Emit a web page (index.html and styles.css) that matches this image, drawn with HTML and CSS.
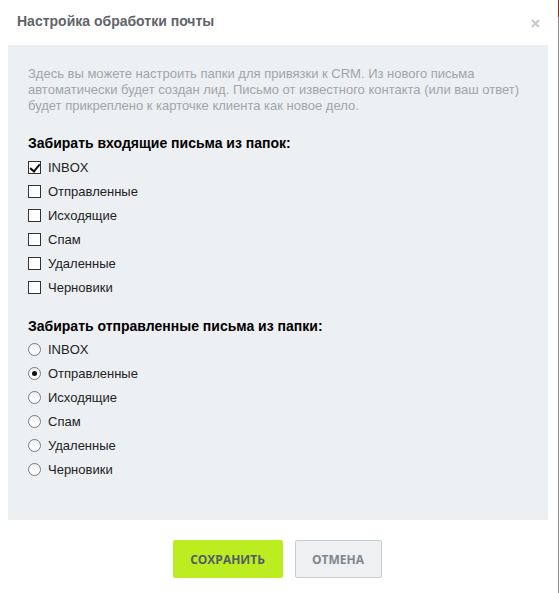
FILE: index.html
```html
<!DOCTYPE html>
<html lang="ru">
<head>
  <meta charset="UTF-8">
  <meta name="viewport" content="width=device-width, initial-scale=1">
  <title>Настройка обработки почты</title>
  <link rel="stylesheet" href="styles.css">
</head>
<body>
  <div class="popup">
    <div class="popup-head">
      <span class="popup-title">Настройка обработки почты</span>
      <span class="popup-close">
        <svg width="9" height="9" viewBox="0 0 9 9"><path d="M1 1L8 8M8 1L1 8" stroke="#c9c9c9" stroke-width="2"/></svg>
      </span>
    </div>

    <div class="popup-body">
      <p class="hint">Здесь вы можете настроить папки для привязки к CRM. Из нового письма автоматически будет создан лид. Письмо от известного контакта (или ваш ответ) будет прикреплено к карточке клиента как новое дело.</p>

      <div class="group">
        <div class="group-title">Забирать входящие письма из папок:</div>
        <label class="row"><input type="checkbox" checked><span>INBOX</span></label>
        <label class="row"><input type="checkbox"><span>Отправленные</span></label>
        <label class="row"><input type="checkbox"><span>Исходящие</span></label>
        <label class="row"><input type="checkbox"><span>Спам</span></label>
        <label class="row"><input type="checkbox"><span>Удаленные</span></label>
        <label class="row"><input type="checkbox"><span>Черновики</span></label>
      </div>

      <div class="group">
        <div class="group-title">Забирать отправленные письма из папки:</div>
        <label class="row"><input type="radio" name="sent"><span>INBOX</span></label>
        <label class="row"><input type="radio" name="sent" checked><span>Отправленные</span></label>
        <label class="row"><input type="radio" name="sent"><span>Исходящие</span></label>
        <label class="row"><input type="radio" name="sent"><span>Спам</span></label>
        <label class="row"><input type="radio" name="sent"><span>Удаленные</span></label>
        <label class="row"><input type="radio" name="sent"><span>Черновики</span></label>
      </div>
    </div>

    <div class="popup-buttons">
      <button class="btn btn-save">Сохранить</button>
      <button class="btn btn-cancel">Отмена</button>
    </div>
  </div>
</body>
</html>
```

FILE: styles.css
```css
* {
  margin: 0;
  padding: 0;
  box-sizing: border-box;
}

body {
  font-family: "Liberation Sans", Arial, sans-serif;
  background: #fff;
  width: 559px;
  min-height: 593px;
}

.popup {
  width: 559px;
  min-height: 593px;
  border-right: 1px solid #8a8a8a;
  border-image: linear-gradient(#9a2b1d 18px, #8a8a8a 18px) 1;
}

.popup-head {
  height: 45px;
  display: flex;
  align-items: center;
  justify-content: space-between;
  padding: 0 18px 0 17px;
}

.popup-title {
  font-size: 14px;
  font-weight: bold;
  color: #5f646a;
  margin-top: -4px;
}

.popup-close {
  display: flex;
  margin-top: 1px;
}

.popup-body {
  margin: 0 8px;
  width: 540px;
  background: #edf0f3;
  padding: 21px 20px 38px;
  height: 475px;
}

.hint {
  font-size: 13px;
  line-height: 16px;
  color: #a1a5a9;
  margin-bottom: 20px;
}

.group + .group {
  margin-top: 18px;
}

.group-title {
  font-size: 14px;
  font-weight: bold;
  line-height: 18px;
  color: #000;
  margin-bottom: 3px;
}

.group + .group .group-title {
  margin-bottom: 2px;
}

.row {
  display: flex;
  align-items: center;
  height: 24px;
  font-size: 13px;
  color: #222;
}

.row input {
  appearance: none;
  -webkit-appearance: none;
  width: 13px;
  height: 13px;
  margin-right: 7px;
  flex-shrink: 0;
  background: #fff;
  position: relative;
}

.row input[type="checkbox"] {
  border: 1px solid #333;
}

.row input[type="checkbox"]:checked::after {
  content: "";
  position: absolute;
  left: 3px;
  top: 0px;
  width: 4px;
  height: 8px;
  border: solid #111;
  border-width: 0 2px 2px 0;
  transform: rotate(40deg);
}

.row input[type="radio"] {
  border: 1px solid #7a7a7a;
  border-radius: 50%;
  background: linear-gradient(#f1f1f1, #fff);
}

.row input[type="radio"]:checked::after {
  content: "";
  position: absolute;
  left: 3px;
  top: 3px;
  width: 5px;
  height: 5px;
  border-radius: 50%;
  background: #111;
}

.popup-buttons {
  display: flex;
  justify-content: center;
  gap: 12px;
  padding: 20px 4px 0 0;
}

.btn {
  height: 38px;
  border-radius: 2px;
  font-family: "Open Sans", sans-serif;
  font-size: 12px;
  font-weight: bold;
  text-transform: uppercase;
  cursor: pointer;
}

.btn-save {
  width: 110px;
  background: #bbed21;
  border: none;
  color: #535c69;
}

.btn-cancel {
  width: 87px;
  background: #eef0f2;
  border: 1px solid #c6cdd3;
  color: #80868e;
}
```
